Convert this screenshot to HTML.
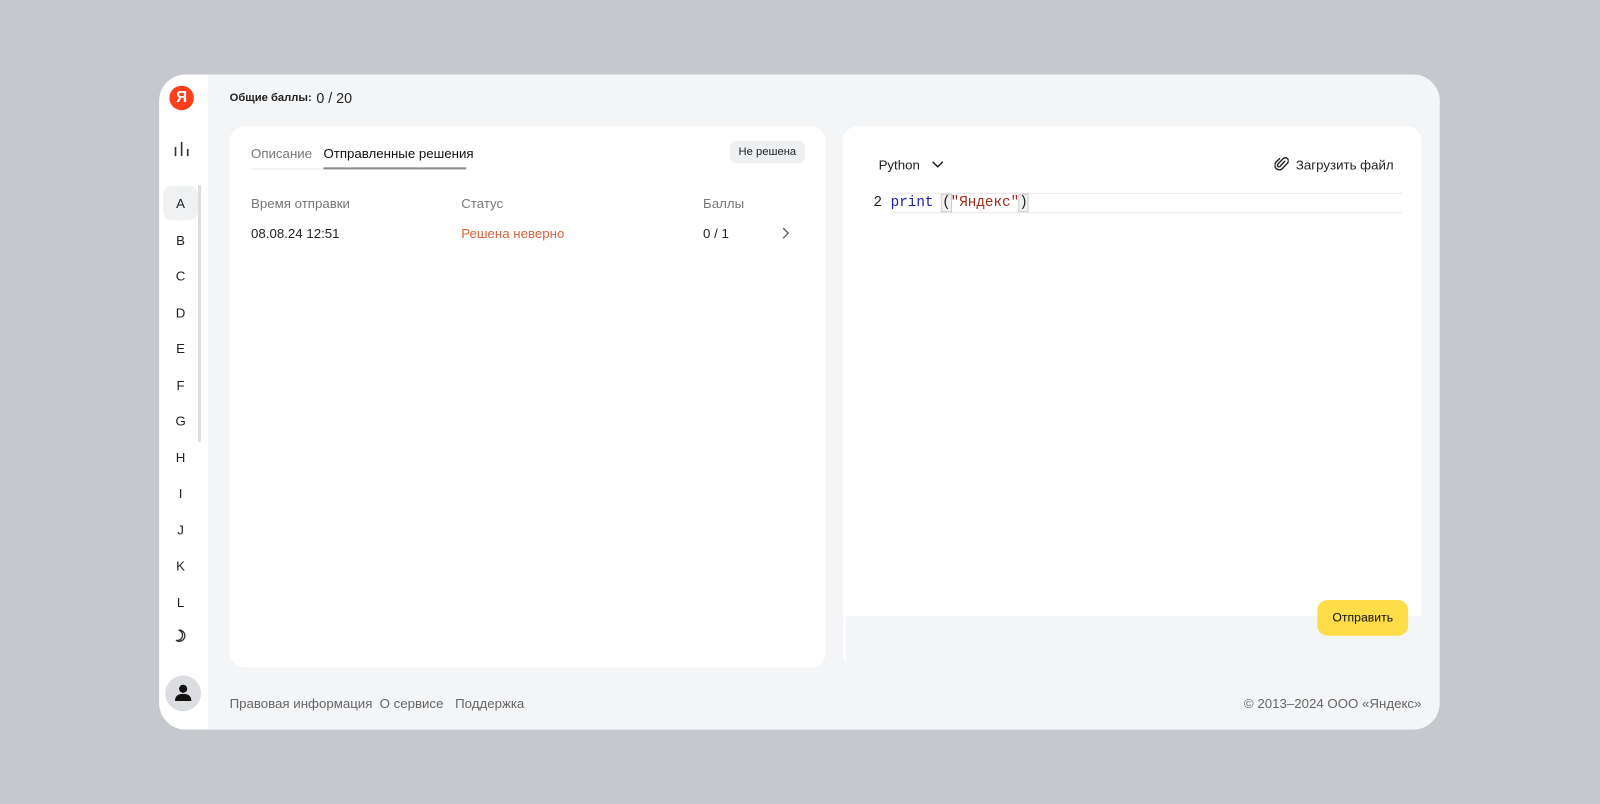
<!DOCTYPE html>
<html><head><meta charset="utf-8"><style>
*{box-sizing:border-box;margin:0;padding:0}
body{width:1600px;height:804px;background:#c5c8cc;font-family:"Liberation Sans",sans-serif;position:relative;overflow:hidden;color:#222}
.wrap{position:absolute;left:0;top:0;width:1568px;height:788px;transform:scale(1.0204);transform-origin:0 0}
.frame{position:absolute;left:156px;top:73px;width:1255px;height:642px;border-radius:26px;background:#f4f5f7;overflow:hidden}
.side{position:absolute;left:0;top:0;width:48px;height:100%;background:#fff}
.abs{position:absolute}
.logo{left:10px;top:11px;width:24px;height:24px;border-radius:50%;color:#fff;font-weight:bold;font-size:15px;text-align:center;line-height:24px;background:#fc3f1d}
.let{position:absolute;left:0;width:42px;text-align:center;font-size:13px;color:#222}
.sel{left:4px;top:109px;width:34px;height:34px;background:#f0f1f3;border-radius:9px}
.scroll{left:38px;top:108px;width:3px;height:252px;background:#ddd;border-radius:2px}
.av{left:6px;top:589px;width:35px;height:35px;border-radius:50%;background:#dcdde0}
.card{background:#fff;border-radius:14px;position:absolute}
.t13{font-size:13px}
.gray{color:#777}
</style></head><body>
<div class="wrap">
<div class="frame">
 <div class="side">
  <div class="abs logo">Я</div>
  <svg class="abs" style="left:14px;top:65px" width="16" height="16" viewBox="0 0 16 16"><path d="M2 6v9M8 1v14M14 8v7" stroke="#333" stroke-width="1.6"/></svg>
  <div class="abs sel"></div>
  <div class="abs scroll"></div>
  <div class="let" style="top:119px">A</div>
  <div class="let" style="top:155px">B</div>
  <div class="let" style="top:190px">C</div>
  <div class="let" style="top:226px">D</div>
  <div class="let" style="top:261px">E</div>
  <div class="let" style="top:297px">F</div>
  <div class="let" style="top:332px">G</div>
  <div class="let" style="top:368px">H</div>
  <div class="let" style="top:403px">I</div>
  <div class="let" style="top:439px">J</div>
  <div class="let" style="top:474px">K</div>
  <div class="let" style="top:510px">L</div>
  <svg class="abs" style="left:15px;top:543px" width="14" height="14" viewBox="0 0 14 14"><path d="M4 1.5A5.5 5.5 0 1 1 1.5 11.5A4.5 4.5 0 0 0 4 1.5z" fill="none" stroke="#333" stroke-width="1.3"/></svg>
  <div class="abs av"></div>
  <svg class="abs" style="left:14px;top:597px" width="19" height="19" viewBox="0 0 19 19"><circle cx="9.5" cy="5" r="4" fill="#111"/><path d="M1.5 17c0-5 3-7 8-7s8 2 8 7z" fill="#111"/></svg>
 </div>
 <div class="abs" style="left:69px;top:17px;font-size:11px;font-weight:bold">Общие баллы:</div>
 <div class="abs" style="left:154px;top:15px;font-size:14px">0 / 20</div>

 <div class="card" style="left:69px;top:51px;width:584px;height:530px">
  <div class="abs t13 gray" style="left:21px;top:19px">Описание</div>
  <div class="abs t13" style="left:92px;top:19px;color:#111">Отправленные решения</div>
  <div class="abs" style="left:21px;top:41px;width:210px;height:1px;background:#e8e8e8"></div>
  <div class="abs" style="left:92px;top:40px;width:140px;height:2px;background:#8a8a8a"></div>
  <div class="abs" style="left:490px;top:14px;width:74px;height:22px;border-radius:7px;background:#eff0f2;font-size:11px;text-align:center;line-height:22px">Не решена</div>
  <div class="abs t13 gray" style="left:21px;top:68px">Время отправки</div>
  <div class="abs t13 gray" style="left:227px;top:68px">Статус</div>
  <div class="abs t13 gray" style="left:464px;top:68px">Баллы</div>
  <div class="abs t13" style="left:21px;top:97px">08.08.24 12:51</div>
  <div class="abs t13" style="left:227px;top:97px;color:#d9623b">Решена неверно</div>
  <div class="abs t13" style="left:464px;top:97px">0 / 1</div>
  <svg class="abs" style="left:541px;top:98px" width="8" height="13" viewBox="0 0 8 13"><path d="M1.5 1.5l5 5-5 5" fill="none" stroke="#666" stroke-width="1.4"/></svg>
 </div>

 <div class="card" style="left:670px;top:51px;width:567px;height:530px;overflow:hidden">
  <div class="abs t13" style="left:35px;top:30px">Python</div>
  <svg class="abs" style="left:87px;top:33px" width="12" height="8" viewBox="0 0 12 8"><path d="M1 1.5l5 5 5-5" fill="none" stroke="#222" stroke-width="1.5"/></svg>
  <svg class="abs" style="left:423px;top:29px" width="14" height="15" viewBox="0 0 14 15"><path d="M10 5L5.5 10a1.5 1.5 0 0 1-2.2-2.2L8.5 2.5a3 3 0 0 1 4.3 4.3L7.5 12.5a4.5 4.5 0 0 1-6.3-6.3L5 2.5" fill="none" stroke="#222" stroke-width="1.4" stroke-linecap="round"/></svg>
  <div class="abs t13" style="left:444px;top:30px">Загрузить файл</div>
  <div class="abs" style="left:48px;top:65px;width:500px;height:20px;border-top:1px solid #e8e8e8;border-bottom:1px solid #e8e8e8"></div>
  <div class="abs" style="left:30px;top:66px;font-family:'Liberation Mono',monospace;font-size:14px;line-height:18px;white-space:pre">2 <span style="color:#1b1bb0">print</span> <span style="background:#f0f0f0;outline:1px solid #ccc">(</span><span style="color:#a3281a">"Яндекс"</span><span style="background:#f0f0f0;outline:1px solid #ccc">)</span></div>
  <div class="abs" style="left:3px;top:480px;width:564px;height:50px;background:#f4f5f7"></div>
  <div class="abs" style="left:465px;top:464px;width:89px;height:35px;border-radius:10px;background:#fedd48;font-size:12px;text-align:center;line-height:35px;color:#111">Отправить</div>
 </div>

 <div class="abs t13" style="left:69px;top:609px;color:#666">Правовая информация</div>
 <div class="abs t13" style="left:216px;top:609px;color:#666">О сервисе</div>
 <div class="abs t13" style="left:290px;top:609px;color:#666">Поддержка</div>
 <div class="abs t13" style="right:18px;top:609px;color:#666">© 2013–2024 ООО «Яндекс»</div>
</div>
</div>
</body></html>
